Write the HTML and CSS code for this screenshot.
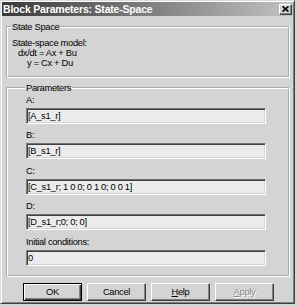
FILE: index.html
```html
<!DOCTYPE html>
<html>
<head>
<meta charset="utf-8">
<link rel="stylesheet" href="styles.css">
</head>
<body>
<div class="window">
  <div class="titlebar">
    <span class="title">Block Parameters: State-Space</span>
    <span class="close"><svg width="7" height="6" viewBox="0 0 7 6"><path d="M0.6 0.4 L6.4 5.6 M6.4 0.4 L0.6 5.6" stroke="#000" stroke-width="1.7"/></svg></span>
  </div>
  <div class="body">
    <fieldset class="group group-info">
      <legend>State Space</legend>
      <div class="line">State-space model:</div>
      <div class="line indent1">dx/dt = Ax + Bu</div>
      <div class="line indent2">y = Cx + Du</div>
    </fieldset>
    <fieldset class="group group-params">
      <legend>Parameters</legend>
      <div class="param"><div class="label">A:</div><div class="field">[A_s1_r]</div></div>
      <div class="param gap-b"><div class="label">B:</div><div class="field">[B_s1_r]</div></div>
      <div class="param gap-a"><div class="label">C:</div><div class="field">[C_s1_r; 1 0 0; 0 1 0; 0 0 1]</div></div>
      <div class="param gap-b"><div class="label">D:</div><div class="field">[D_s1_r;0; 0; 0]</div></div>
      <div class="param gap-a"><div class="label">Initial conditions:</div><div class="field">0</div></div>
    </fieldset>
    <div class="buttons">
      <div class="btn default">OK</div>
      <div class="btn">Cancel</div>
      <div class="btn"><u>H</u>elp</div>
      <div class="btn disabled"><u>A</u>pply</div>
    </div>
  </div>
</div>
</body>
</html>
```
FILE: styles.css
```css
html, body {
  margin: 0;
  padding: 0;
}
body {
  width: 298px;
  height: 307px;
  overflow: hidden;
  background: #d6d6d6;
  font-family: "Liberation Sans", Arial, sans-serif;
  font-size: 9.3px;
  letter-spacing: -0.3px;
  color: #000;
}
.window {
  box-sizing: border-box;
  width: 295px;
  height: 304px;
  background: #d4d4d4;
  border: 1px solid;
  border-color: #dcdcdc #404040 #404040 #dcdcdc;
  box-shadow: inset 1px 1px #ffffff, inset -1px -1px #808080;
  padding: 1px;
  display: flex;
  flex-direction: column;
}
.titlebar {
  height: 14px;
  flex: none;
  display: flex;
  justify-content: space-between;
  align-items: flex-start;
  background: linear-gradient(to right, #3a3a3a, #c2c2c2);
}
.title {
  color: #fff;
  font-weight: bold;
  font-size: 10.5px;
  letter-spacing: -0.2px;
  line-height: 14px;
  padding-left: 1px;
}
.close {
  box-sizing: border-box;
  width: 13px;
  height: 11px;
  margin-top: 2px;
  margin-right: 1px;
  background: #d4d4d4;
  border-top: 1px solid #fff;
  border-left: 1px solid #fff;
  border-right: 1px solid #404040;
  border-bottom: 1px solid #404040;
  box-shadow: inset -1px -1px #808080;
  display: flex;
  align-items: center;
  justify-content: center;
}
.close svg {
  display: block;
  margin-left: -1px;
  margin-top: -1px;
}
.body {
  padding: 0 3px 0 4px;
  display: flex;
  flex-direction: column;
}
.group {
  margin: 0;
  border: 2px groove #ffffff;
  min-width: 0;
}
.group legend {
  line-height: 10px;
  padding: 0 1px;
  margin-left: -1px;
}
.group-info {
  margin-top: 6px;
  padding: 6px 4px 8px 4px;
}
.group-params {
  margin-top: 5px;
  padding: 2px 4px 9px 18px;
}
.line {
  line-height: 10px;
}
.indent1 { padding-left: 6px; }
.indent2 { padding-left: 15px; }
.param {
  display: flex;
  flex-direction: column;
  gap: 3px;
}
.gap-b { margin-top: 6px; }
.gap-a { margin-top: 7px; }
.label {
  line-height: 10px;
}
.field {
  box-sizing: border-box;
  width: 240px;
  height: 16px;
  background: #ebebeb;
  border-top: 1px solid #707070;
  border-left: 1px solid #808080;
  border-right: 1px solid #ffffff;
  border-bottom: 1px solid #ffffff;
  box-shadow: inset 1px 1px #404040, inset -1px -1px #d4d4d4;
  padding: 0 2px 0 1px;
  line-height: 14px;
  white-space: nowrap;
  overflow: hidden;
}
.buttons {
  display: flex;
  gap: 5px;
  margin-top: 6px;
  padding-left: 17px;
}
.btn {
  box-sizing: border-box;
  width: 59px;
  height: 18px;
  display: flex;
  align-items: center;
  justify-content: center;
  border-top: 1px solid #fff;
  border-left: 1px solid #fff;
  border-right: 1px solid #404040;
  border-bottom: 1px solid #404040;
  box-shadow: inset -1px -1px #808080;
}
.btn.default {
  border: 1px solid #000;
  box-shadow: inset 1px 1px #fff, inset -1px -1px #404040, inset -2px -2px #808080;
}
.btn.disabled {
  color: #8a8a8a;
  text-shadow: 1px 1px #ffffff;
}
```
